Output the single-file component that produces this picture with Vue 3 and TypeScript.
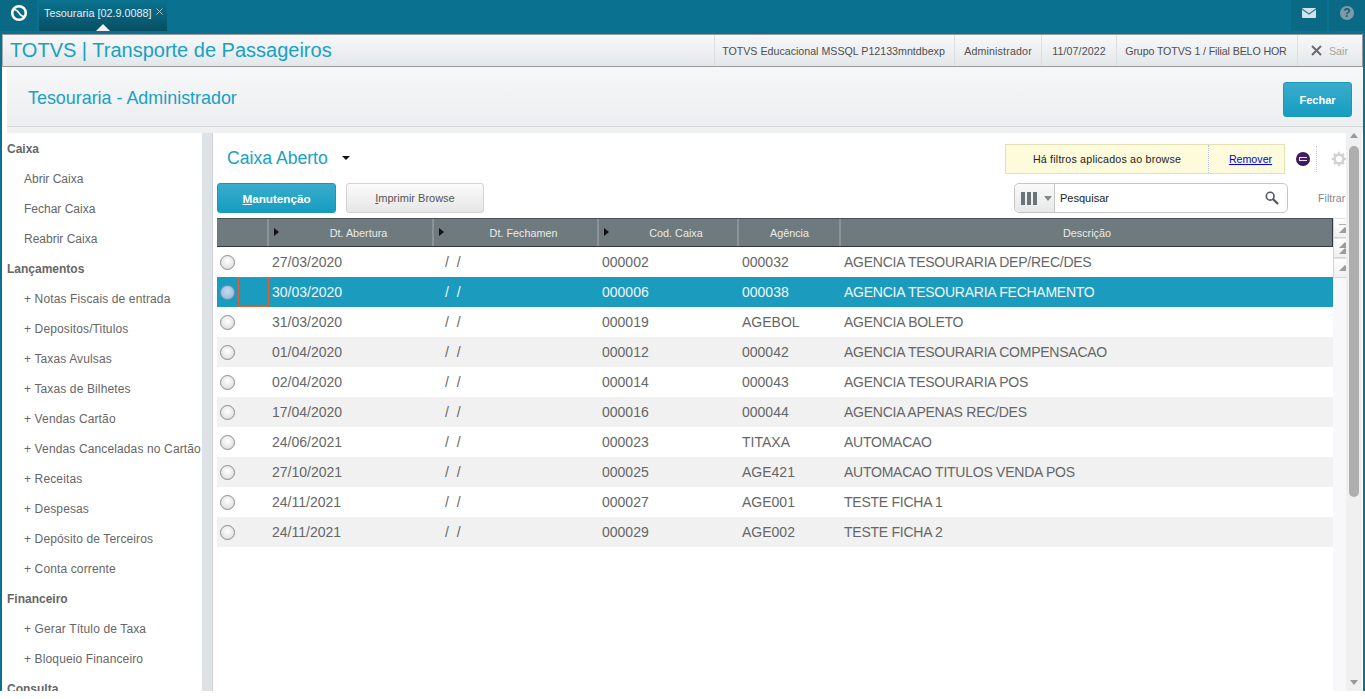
<script setup lang="ts">
interface MenuItem { label: string; head?: boolean; plus?: boolean }
const labels: string[] = ['#Caixa','Abrir Caixa','Fechar Caixa','Reabrir Caixa','#Lançamentos','+ Notas Fiscais de entrada','+ Depositos/Titulos','+ Taxas Avulsas','+ Taxas de Bilhetes','+ Vendas Cartão','+ Vendas Canceladas no Cartão','+ Receitas','+ Despesas','+ Depósito de Terceiros','+ Conta corrente','#Financeiro','+ Gerar Título de Taxa','+ Bloqueio Financeiro','#Consulta']
const menu: MenuItem[] = labels.map(l => l.startsWith('#') ? { label: l.slice(1), head: true } : { label: l, plus: l.startsWith('+') })
const rows: string[][] = [
  ['27/03/2020','000002','000032','AGENCIA TESOURARIA DEP/REC/DES'],
  ['30/03/2020','000006','000038','AGENCIA TESOURARIA FECHAMENTO'],
  ['31/03/2020','000019','AGEBOL','AGENCIA BOLETO'],
  ['01/04/2020','000012','000042','AGENCIA TESOURARIA COMPENSACAO'],
  ['02/04/2020','000014','000043','AGENCIA TESOURARIA POS'],
  ['17/04/2020','000016','000044','AGENCIA APENAS REC/DES'],
  ['24/06/2021','000023','TITAXA','AUTOMACAO'],
  ['27/10/2021','000025','AGE421','AUTOMACAO TITULOS VENDA POS'],
  ['24/11/2021','000027','AGE001','TESTE FICHA 1'],
  ['24/11/2021','000029','AGE002','TESTE FICHA 2'],
]
</script>

<template>
  <div class="page">
    <header class="topbar">
      <div class="tile logo">
        <svg width="18" height="18" viewBox="0 0 18 18"><circle cx="9" cy="9" r="6.8" fill="none" stroke="#fff" stroke-width="2.6"/><path d="M3.6 5.6 C6.6 5.4 7.8 7.2 9 9 C10.2 10.8 11.4 12.6 14.4 12.4" fill="none" stroke="#fff" stroke-width="1.5"/></svg>
      </div>
      <div class="tab">
        <span>Tesouraria [02.9.0088]</span>
        <svg class="tabx" width="7" height="7" viewBox="0 0 7 7"><path d="M.5 .5 L6.5 6.5 M6.5 .5 L.5 6.5" stroke="#a9c3cd" stroke-width="1"/></svg>
        <i class="caret"></i>
      </div>
      <div class="grow"></div>
      <div class="tile mail">
        <svg width="14" height="10" viewBox="0 0 14 10"><rect width="14" height="10" rx="1" fill="#d4e3e9"/><path d="M0 1 L7 6 L14 1" fill="none" stroke="#2f7f98" stroke-width="1.3"/></svg>
      </div>
      <div class="tile help"><span>?</span></div>
    </header>

    <div class="frame">
      <div class="titlebar">
        <h1>TOTVS | Transporte de Passageiros</h1>
        <div class="info">
          <span class="i1">TOTVS Educacional MSSQL P12133mntdbexp</span>
          <span class="i2">Administrador</span>
          <span class="i3">11/07/2022</span>
          <span class="i4">Grupo TOTVS 1 / Filial BELO HOR</span>
          <span class="sair"><svg width="11" height="11" viewBox="0 0 11 11"><path d="M1 1 L10 10 M10 1 L1 10" stroke="#6b6b6b" stroke-width="2"/></svg>Sair</span>
        </div>
      </div>

      <div class="workspace">
        <div class="pagehead">
          <h2>Tesouraria - Administrador</h2>
          <button class="btn primary fechar">Fechar</button>
        </div>
        <div class="strip"></div>
        <div class="body">
          <nav class="side">
            <div v-for="m in menu" :key="m.label" class="mi" :class="{ head: m.head, plus: m.plus }">{{ m.label }}</div>
          </nav>
          <div class="gutter"></div>
          <main class="main">
            <div class="content">
              <div class="row1">
                <div class="title">Caixa Aberto</div>
                <i class="tri"></i>
                <div class="grow"></div>
                <div class="notice">
                  <span class="ntext">Há filtros aplicados ao browse</span>
                  <a class="rem">Remover</a>
                </div>
                <span class="dot"><i></i></span>
                <span class="vdots"></span>
                <svg class="gear" width="16" height="16" viewBox="0 0 16 16"><circle cx="8" cy="8" r="4.4" fill="none" stroke="#d2d2d2" stroke-width="2.6"/><path d="M8 .8v3M8 12.2v3M.8 8h3M12.2 8h3M2.9 2.9l2.1 2.1M11 11l2.1 2.1M13.1 2.9L11 5M5 11l-2.1 2.1" stroke="#d2d2d2" stroke-width="2.2"/></svg>
              </div>
              <div class="row2">
                <button class="btn primary man"><u>M</u>anutenção</button>
                <button class="btn plain"><u>I</u>mprimir Browse</button>
                <div class="grow"></div>
                <div class="search">
                  <div class="colsel"><i></i><i></i><i></i><em></em></div>
                  <span class="q">Pesquisar</span>
                  <svg width="14" height="14" viewBox="0 0 14 14"><circle cx="5.2" cy="5.2" r="3.9" fill="none" stroke="#4a5660" stroke-width="1.6"/><path d="M8.2 8.2 L13 13" stroke="#4a5660" stroke-width="2.3"/></svg>
                </div>
                <span class="filtrar">Filtrar</span>
              </div>
              <div class="gridwrap">
                <div class="grid">
                  <div class="tr th">
                    <div class="c c0"></div>
                    <div class="c c1"><i class="arr"></i><span>Dt. Abertura</span></div>
                    <div class="c c2"><i class="arr"></i><span>Dt. Fechamen</span></div>
                    <div class="c c3"><i class="arr"></i><span>Cod. Caixa</span></div>
                    <div class="c c4"><span>Agência</span></div>
                    <div class="c c5"><span>Descrição</span></div>
                  </div>
                  <div v-for="(r, i) in rows" :key="r[1]" class="tr td" :class="{ alt: i % 2 === 1, sel: i === 1 }">
                    <div class="c c0"><span class="radio"></span><span v-if="i === 1" class="focus"></span></div>
                    <div class="c c1">{{ r[0] }}</div>
                    <div class="c c2">/&nbsp;&nbsp;/</div>
                    <div class="c c3">{{ r[1] }}</div>
                    <div class="c c4">{{ r[2] }}</div>
                    <div class="c c5">{{ r[3] }}</div>
                  </div>
                </div>
                <div class="gridscroll">
                  <div class="gs"><i class="up bar"></i></div>
                  <div class="gs"><i class="up"></i><i class="up"></i></div>
                  <div class="gs"><i class="up"></i></div>
                </div>
              </div>
            </div>
            <div class="outerscroll">
              <i class="sup"></i>
              <div class="thumb"></div>
              <div class="grow"></div>
              <i class="sdown"></i>
            </div>
          </main>
        </div>
      </div>
    </div>
  </div>
</template>

<style>
html, body { margin: 0; padding: 0; background: #fff; overflow: hidden; }
</style>

<style scoped>
.page { width: 1365px; height: 691px; background: #0b7190; display: flex; flex-direction: column; overflow: hidden; font-family: "Liberation Sans", Arial, sans-serif; }
.grow { flex: 1; }
.topbar { height: 33px; display: flex; background: #0b7190; flex: none; margin-bottom: 1px; }
.tile { background: #0a6a85; display: flex; align-items: center; justify-content: center; height: 31px; box-sizing: border-box; padding-bottom: 5px; }
.logo { width: 37px; }
.mail { width: 36px; }
.help { width: 36px; margin-left: 2px; }
.help span { width: 14px; height: 14px; border-radius: 50%; background: #7f9ba7; color: #0a5f78; font: bold 12px/14px "Liberation Sans", sans-serif; text-align: center; }
.tab { position: relative; margin-left: 2px; width: 128px; height: 31px; background: linear-gradient(#0a7390, #074f63); color: #e4eef2; font-size: 10.8px; display: flex; align-items: center; padding-left: 5px; padding-bottom: 5px; box-sizing: border-box; }
.tabx { margin-left: 5px; margin-top: -3px; }
.caret { position: absolute; left: 57px; bottom: 0; width: 0; height: 0; border: 7px solid transparent; border-top: 0; border-bottom: 7px solid #f1f3f4; }
.frame { flex: 1; margin: 0 2px; background: #fff; display: flex; flex-direction: column; min-height: 0; }
.titlebar { height: 33px; box-sizing: border-box; flex: none; border: 1px solid #9a9a9a; border-left-color: #aaa; background: linear-gradient(#f7f8f9, #e4e7ea); display: flex; align-items: center; justify-content: space-between; }
.titlebar h1 { margin: 0 0 0 7px; font-size: 20px; font-weight: 400; color: #17a1c5; }
.info { display: flex; align-self: stretch; font-size: 10.67px; color: #4f4f4f; }
.info span { display: flex; align-items: center; justify-content: center; flex: none; box-sizing: border-box; border-left: 1px solid #dcdfe2; white-space: nowrap; }
.i1 { width: 240px; padding-right: 2px; }
.i2 { width: 87px; letter-spacing: .15px; }
.i3 { width: 75px; letter-spacing: .1px; }
.i4 { width: 181px; letter-spacing: -.13px; padding-right: 2px; }
.info .sair { color: #a3a3a3; width: 65px; justify-content: flex-start; padding-left: 13px; gap: 7px; }
.workspace { flex: 1; margin-left: 5px; display: flex; flex-direction: column; min-height: 0; }
.pagehead { height: 60px; flex: none; box-sizing: border-box; padding: 6px 11px 0 21px; border-bottom: 1px solid #d5d9dc; background: linear-gradient(#f6f7f7, #eceef0); display: flex; align-items: center; justify-content: space-between; }
.pagehead h2 { margin: 0 0 2px; font-size: 17.9px; font-weight: 400; color: #17a1c5; }
.strip { height: 6px; flex: none; background: #eef0f1; }
.btn { font-family: "Liberation Sans", Arial, sans-serif; font-size: 11px; border-radius: 3px; padding: 0; box-sizing: border-box; cursor: pointer; }
.primary { border: 1px solid #1c97bb; background: linear-gradient(#3aaccb, #169dc1); color: #fff; font-weight: 700; }
.plain { border: 1px solid #d3d3d3; background: linear-gradient(#fbfbfb, #e6e6e6); color: #555; }
.fechar { width: 69px; height: 35px; }
.body { flex: 1; display: flex; min-height: 0; }
.side { width: 195px; flex: none; background: #fff; overflow: hidden; padding-top: 1px; box-sizing: border-box; }
.mi { height: 30px; line-height: 30px; padding-left: 17px; font-size: 12px; color: #666; white-space: nowrap; }
.mi.plus { letter-spacing: .13px; }
.mi.head { padding-left: 0; font-weight: 700; }
.gutter { width: 10px; flex: none; background: #dde2e6; border-right: 1px solid #d2d6da; }
.main { flex: 1; display: flex; min-width: 0; background: #fff; padding-right: 1px; }
.content { flex: 1; padding: 11px 0 0 4px; min-width: 0; display: flex; flex-direction: column; overflow: hidden; }
.row1 { height: 30px; display: flex; align-items: center; flex: none; }
.title { font-size: 17.6px; color: #17a1c5; margin-left: 10px; margin-top: -2px; }
.tri { margin-left: 14px; margin-top: -2px; border: 4px solid transparent; border-bottom: 0; border-top: 4px solid #111; }
.notice { width: 280px; height: 30px; box-sizing: border-box; background: #fdfbdc; border: 1px solid #e3e2b4; display: flex; align-items: center; font-size: 10.67px; color: #222; }
.ntext { width: 203px; text-align: center; border-right: 1px dotted #b9c3cc; line-height: 28px; box-sizing: border-box; letter-spacing: .2px; }
.rem { flex: 1; text-align: center; color: #0000ee; text-decoration: underline; padding-left: 8px; }
.dot { width: 14px; height: 14px; border-radius: 50%; background: radial-gradient(circle at 50% 40%, #4a2372, #2c1548); margin-left: 11px; display: flex; align-items: center; justify-content: center; }
.dot i { width: 8px; height: 4px; border: 1px solid #e8e4ee; border-right: 0; box-sizing: border-box; }
.vdots { height: 26px; border-left: 1px dotted #ccc; margin-left: 6px; }
.gear { margin-left: 14px; margin-right: -1px; flex: none; }
.row2 { height: 30px; display: flex; align-items: center; margin-top: 9px; flex: none; }
.man { width: 119px; height: 30px; font-size: 11.7px; }
.plain { width: 138px; height: 30px; margin-left: 10px; font-size: 11px; }
.search { width: 274px; height: 30px; box-sizing: border-box; border: 1px solid #c6c6c6; border-radius: 5px; display: flex; align-items: center; font-size: 11px; color: #222; padding-right: 8px; }
.colsel { width: 40px; height: 28px; flex: none; box-sizing: border-box; border-right: 1px solid #c6c6c6; background: linear-gradient(#fafafa, #e8e8e8); border-radius: 5px 0 0 5px; display: flex; align-items: center; padding-left: 6px; gap: 2px; }
.colsel i { width: 4px; height: 13px; background: #6b7479; }
.colsel em { margin-left: 5px; border: 4px solid transparent; border-bottom: 0; border-top: 5px solid #838a8e; }
.q { flex: 1; padding-left: 5px; }
.filtrar { font-size: 10.67px; color: #888; margin-left: 30px; width: 28px; overflow: hidden; white-space: nowrap; }
.gridwrap { display: flex; margin-top: 5px; flex: 1; min-height: 0; }
.grid { width: 1116px; flex: none; }
.tr { display: flex; }
.th { height: 29px; box-sizing: border-box; background: #6e7a7d; color: #e8ecec; font-size: 10.8px; border-top: 1px solid #4a5254; border-bottom: 1px solid #33393b; border-right: 1px solid #33393b; }
.th .c { display: flex; align-items: center; justify-content: center; border-right: 2px solid #8a9497; box-sizing: border-box; position: relative; }
.th .c1, .th .c2, .th .c3 { padding-left: 16px; }
.th .c4 { padding-left: 1px; }
.th .c5 { border-right: 0; }
.arr { position: absolute; left: 5px; top: 9px; border: 4px solid transparent; border-right: 0; border-left: 5px solid #111; }
.td { height: 30px; background: #fff; color: #666; font-size: 14px; line-height: 30px; }
.td.alt { background: #f1f1f1; }
.td.sel { background: #1b9cbe; color: #f2f7f9; }
.c { flex: none; box-sizing: border-box; white-space: nowrap; overflow: hidden; }
.td .c { padding-left: 3px; }
.c0 { width: 52px; position: relative; display: flex; align-items: center; }
.c1 { width: 165px; }
.c2 { width: 165px; }
.c3 { width: 140px; }
.c4 { width: 102px; }
.c5 { width: 492px; }
.td .c2 { padding-left: 11px; }
.td .c5 { letter-spacing: -.25px; }
.radio { width: 15px; height: 15px; border-radius: 50%; border: 1px solid #8c8c8c; background: radial-gradient(circle at 50% 40%, #fff, #d6d6d6); box-sizing: border-box; flex: none; }
.sel .radio { border-color: #7592ad; background: radial-gradient(circle at 50% 40%, #c6daf0, #8fb2d8); }
.focus { position: absolute; left: 21px; top: 0; width: 31px; height: 30px; box-sizing: border-box; border: 1px dotted #e2683d; }
.gridscroll { width: 13px; flex: none; background: #f8f8fa; display: flex; flex-direction: column; overflow: hidden; }
.gs { height: 20px; box-sizing: border-box; flex: none; border-bottom: 1px solid #d4d4d4; border-left: 1px solid #d4d4d4; border-top: 1px solid #e2e2e2; background: linear-gradient(#fdfdfd, #f0f0f0); display: flex; flex-direction: column; align-items: flex-start; justify-content: center; padding-left: 5px; }
.up { flex: none; border: 6px solid transparent; border-top: 0; border-bottom: 6px solid #9c9c9c; }
.gs:nth-child(2) .up { border-bottom-width: 6px; }
.up.bar { box-shadow: none; margin-top: 2px; }
.gs:first-child::before { content: ""; width: 100%; min-width: 8px; height: 1px; background: #b0b0b0; margin-bottom: 0; }
.outerscroll { width: 16px; flex: none; background: #f0f0f0; display: flex; flex-direction: column; align-items: center; padding: 0 0 6px; box-sizing: border-box; }
.sup { border: 4px solid transparent; border-top: 0; border-bottom: 5px solid #999; margin-top: 0; }
.thumb { width: 10px; height: 351px; background: #aeaeae; border-radius: 5px; margin-top: 8px; }
.sdown { border: 4px solid transparent; border-bottom: 0; border-top: 5px solid #999; }
</style>
